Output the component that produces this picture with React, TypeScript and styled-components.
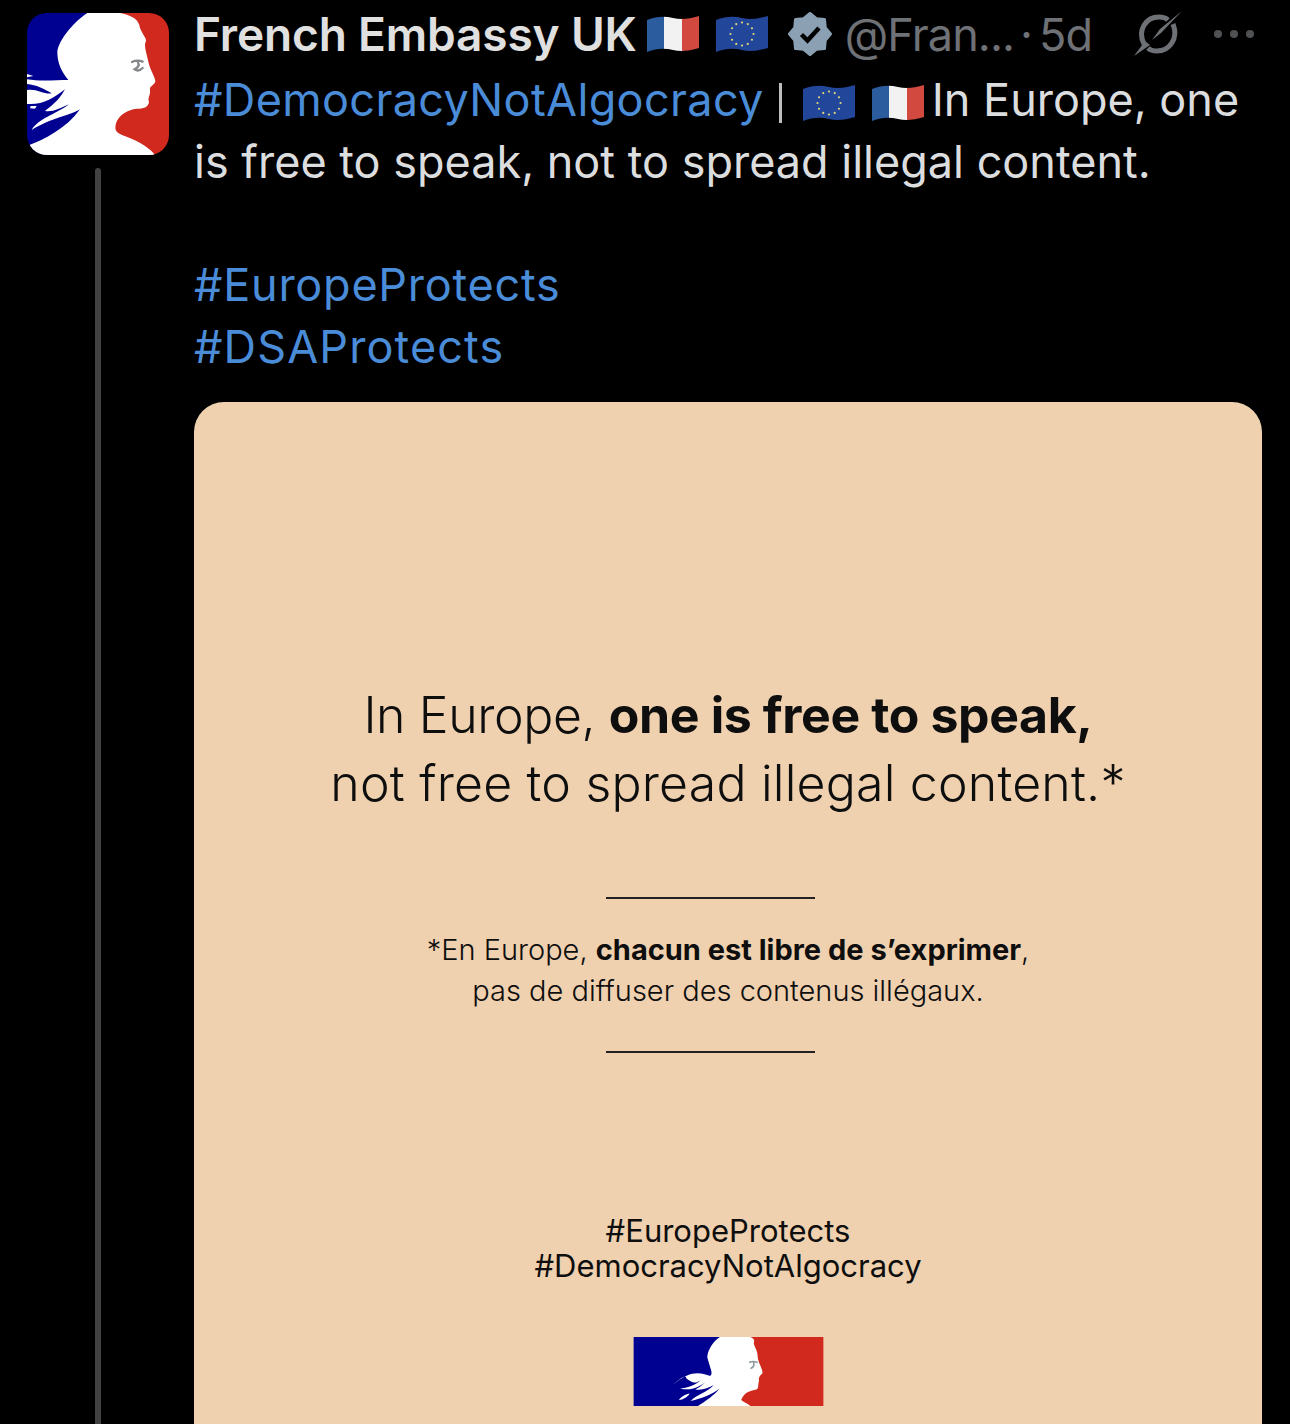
import React from "react";
import styled, { createGlobalStyle } from "styled-components";

const Global = createGlobalStyle`
  html, body { margin: 0; padding: 0; background: #000; }
  body { font-family: "Inter", "Liberation Sans", sans-serif; }
`;

const Page = styled.div`
  width: 1290px;
  height: 1424px;
  overflow: hidden;
  background: #000;
  display: grid;
  grid-template-columns: 194px 1068px;
`;

const Rail = styled.div`
  display: flex;
  flex-direction: column;
  align-items: flex-start;
  padding: 13px 0 0 27px;
`;

const AvatarFrame = styled.svg`
  display: block;
  width: 142px;
  height: 142px;
  border-radius: 20px;
`;

const ThreadLine = styled.div`
  width: 6px;
  flex: 1;
  margin: 13px 0 0 68px;
  background: #424242;
  border-radius: 3px 3px 0 0;
`;

const Main = styled.div`
  display: flex;
  flex-direction: column;
  min-width: 0;
`;

const Header = styled.div`
  height: 68px;
  padding-bottom: 2px;
  display: flex;
  align-items: center;
  white-space: nowrap;
`;

const Name = styled.span`
  font-size: 46px;
  font-weight: 600;
  letter-spacing: -0.15px;
  color: #e0e0e0;
  margin-right: 10px;
`;

const Handle = styled.span`
  font-size: 45px;
  font-weight: 400;
  letter-spacing: -0.9px;
  color: #6e7175;
`;

const HandleDot = styled(Handle)`
  margin-left: 6px;
`;

const Age = styled(Handle)`
  margin-left: 7px;
`;

const Body = styled.div`
  font-size: 45px;
  line-height: 61.5px;
  color: #dcdddf;
  margin-top: -1px;
  white-space: nowrap;
`;

const Tag = styled.span<{ $ls: number }>`
  color: #4a8cd8;
  letter-spacing: ${(p) => p.$ls}px;
`;

const Divider = styled.span`
  display: inline-block;
  width: 3px;
  height: 40px;
  background: #bdbdbd;
  vertical-align: -7px;
  margin: 0 21px 0 15px;
`;

const Blank = styled.div`
  height: 62px;
`;

const Card = styled.div`
  margin-top: 25px;
  flex: 1;
  min-height: 1100px;
  background: #efd1b0;
  border-radius: 30px 30px 0 0;
  display: flex;
  flex-direction: column;
  align-items: center;
  color: #0e0e0e;
  padding-top: 279px;
`;

const Headline = styled.div`
  font-size: 50px;
  line-height: 68px;
  text-align: center;
  white-space: nowrap;
  font-weight: 300;
  b { font-weight: 700; }
`;

const HeadlineRow = styled.div<{ $ls: number }>`
  letter-spacing: ${(p) => p.$ls}px;
`;

const Rule = styled.div<{ $top: number }>`
  width: 209px;
  height: 2px;
  background: #222;
  margin: ${(p) => p.$top}px 35px 0 0;
`;

const French = styled.div`
  margin-top: 30px;
  font-size: 29px;
  line-height: 41px;
  text-align: center;
  white-space: nowrap;
  font-weight: 300;
  b { font-weight: 700; }
`;

const Tags = styled.div`
  margin-top: 160px;
  font-size: 31px;
  line-height: 35px;
  text-align: center;
  white-space: nowrap;
  font-weight: 400;
`;

const LogoFrame = styled.svg`
  display: block;
  width: 191px;
  height: 69px;
  margin-top: 54px;
`;

const InlineFlag = styled.svg<{ $right: number }>`
  display: inline-block;
  width: 52px;
  height: 38px;
  vertical-align: -6px;
  margin-right: ${(p) => p.$right}px;
`;

const HeaderFlag = styled.svg<{ $gap: number }>`
  width: 52px;
  height: 38px;
  flex: none;
  margin-right: ${(p) => p.$gap}px;
`;

const Badge = styled.svg`
  width: 44px;
  height: 44px;
  flex: none;
  margin: 0 13px 0 20px;
`;

const Grok = styled.svg`
  width: 52px;
  height: 52px;
  flex: none;
  margin-left: 40px;
`;

const More = styled.svg`
  width: 44px;
  height: 12px;
  flex: none;
  margin-left: 28px;
`;

const WAVE = "M0 5 C10 1 18 1 26 3 C34 5 42 4 52 1 L52 33 C42 36 34 37 26 35 C18 33 10 33 0 37 Z";

const Flag = ({ kind, clip }: { kind: "fr" | "eu"; clip: string }) => (
  <>
    <defs>
      <clipPath id={clip}>
        <path d={WAVE} />
      </clipPath>
    </defs>
    <g clipPath={`url(#${clip})`}>
      {kind === "fr" ? (
        <>
          <rect x="0" y="0" width="18" height="38" fill="#2b5c9e" />
          <rect x="17" y="0" width="19" height="38" fill="#f2f2f2" />
          <rect x="35" y="0" width="17" height="38" fill="#d1493f" />
        </>
      ) : (
        <rect x="0" y="0" width="52" height="38" fill="#22479a" />
      )}
    </g>
    {kind === "eu" &&
      Array.from({ length: 12 }).map((_, i) => {
        const a = (i * Math.PI) / 6;
        return (
          <circle
            key={i}
            cx={26 + Math.cos(a) * 11.5}
            cy={19 + Math.sin(a) * 11.5}
            r="1.1"
            fill="#e0d878"
          />
        );
      })}
  </>
);

const BADGE_POINTS = Array.from({ length: 16 })
  .map((_, i) => {
    const a = (i * Math.PI) / 8 - Math.PI / 2;
    const r = i % 2 === 0 ? 20.5 : 16.5;
    return `${(22 + Math.cos(a) * r).toFixed(2)},${(22 + Math.sin(a) * r).toFixed(2)}`;
  })
  .join(" ");

const Avatar = () => (
  <AvatarFrame viewBox="81 39 426 426">
    <rect x="81" y="39" width="213" height="426" fill="#000091" />
    <rect x="294" y="39" width="213" height="426" fill="#d1291d" />
    <path
      fill="#fff"
      d="M262 39 L360 39 C390 45 412 55 418 75 C420 95 440 112 438 124 C430 135 440 160 445 185 C450 210 466 230 466 245 C460 258 448 258 450 270 C452 285 442 295 447 305 C445 322 430 326 410 326 C385 328 355 345 348 370 C342 395 350 400 380 410 C420 425 450 445 465 465 L105 465 L88 435 C130 420 200 385 240 328 C215 345 150 355 95 390 C115 355 165 345 207 313 C180 325 155 338 135 333 C150 320 175 305 195 268 C160 295 130 315 81 312 L81 270 C110 265 135 285 155 280 C130 265 110 255 81 252 L81 238 C120 245 170 240 205 240 C185 215 172 190 172 155 C175 125 215 70 262 39 Z"
    />
    <path fill="#fff" d="M81 222 L100 228 L81 232 Z" />
    <path fill="#fff" d="M92 318 L110 318 L105 326 L90 325 Z" />
    <path
      fill="none"
      stroke="#85888b"
      strokeWidth="7"
      strokeLinecap="round"
      d="M396 186 C408 180 420 182 428 185 M414 188 C420 196 412 204 404 208 C412 214 420 212 428 204"
    />
  </AvatarFrame>
);

const LogoMark = () => (
  <LogoFrame viewBox="96 50 572 208">
    <rect x="96" y="50" width="290" height="208" fill="#000091" />
    <rect x="380" y="50" width="288" height="208" fill="#d1291d" />
    <path
      fill="#fff"
      d="M356 50 L445 50 C458 52 462 60 458 68 C460 80 470 90 470 110 C472 130 488 150 484 160 C475 168 472 172 474 182 C470 195 474 205 466 208 C450 212 430 214 420 240 C435 250 445 255 448 258 L290 258 C310 245 340 225 355 205 C335 222 300 235 268 243 C285 225 320 215 338 195 C320 205 300 212 282 208 C300 200 315 185 330 163 C335 158 322 130 318 110 C320 85 340 60 356 50 Z"
    />
    <path fill="#fff" d="M330 168 C300 160 270 145 215 195 C240 170 255 165 255 175 C270 185 280 195 300 178 C285 195 255 205 236 205 C270 215 310 195 330 168 Z" />
    <path fill="#fff" d="M232 240 C240 228 255 222 265 220 C258 232 245 238 232 240 Z" />
    <path fill="none" stroke="#8f9a9c" strokeWidth="5" strokeLinecap="round" d="M446 126 C455 122 462 124 468 126 M458 128 C460 136 455 142 450 144" />
  </LogoFrame>
);

export default function App() {
  return (
    <Page>
      <Global />
      <Rail>
        <Avatar />
        <ThreadLine />
      </Rail>
      <Main>
        <Header>
          <Name>French Embassy UK</Name>
          <HeaderFlag $gap={17} viewBox="0 0 52 38"><Flag kind="fr" clip="a" /></HeaderFlag>
          <HeaderFlag $gap={0} viewBox="0 0 52 38"><Flag kind="eu" clip="b" /></HeaderFlag>
          <Badge viewBox="0 0 44 44">
            <polygon points={BADGE_POINTS} fill="#8ba0b3" stroke="#8ba0b3" strokeWidth="3" strokeLinejoin="round" />
            <path d="M13.5 22.5 L19.5 28.5 L31 16" fill="none" stroke="#000" strokeWidth="4.5" />
          </Badge>
          <Handle>@Fran...</Handle>
          <HandleDot>·</HandleDot>
          <Age>5d</Age>
          <Grok viewBox="0 0 52 52">
            <path
              fill="none"
              stroke="#6e7175"
              strokeWidth="5"
              d="M12 36 C5 22 14 9 27 9 C31 9 34 10 36 12 M41 16 C47 31 37 43 25 43 C21 43 18 42 16 40"
            />
            <path fill="#6e7175" d="M50 3 L29 25 L20 32 L28 21 Z" />
            <path fill="#6e7175" d="M2 48 L13 33 L18 37 Z" />
          </Grok>
          <More viewBox="0 0 44 12">
            <circle cx="6" cy="6" r="4" fill="#4f5154" />
            <circle cx="22" cy="6" r="4" fill="#4f5154" />
            <circle cx="38" cy="6" r="4" fill="#4f5154" />
          </More>
        </Header>
        <Body>
          <Tag $ls={0.35}>#DemocracyNotAlgocracy</Tag>
          <Divider />
          <InlineFlag $right={17} viewBox="0 0 52 38"><Flag kind="eu" clip="c" /></InlineFlag>
          <InlineFlag $right={8} viewBox="0 0 52 38"><Flag kind="fr" clip="d" /></InlineFlag>
          In Europe, one
          <br />
          is free to speak, not to spread illegal content.
          <Blank />
          <Tag $ls={0.75}>#EuropeProtects</Tag>
          <br />
          <Tag $ls={1.1}>#DSAProtects</Tag>
        </Body>
        <Card>
          <Headline>
            <HeadlineRow $ls={-0.4}>
              In Europe, <b>one is free to speak,</b>
            </HeadlineRow>
            <HeadlineRow $ls={0.2}>not free to spread illegal content.*</HeadlineRow>
          </Headline>
          <Rule $top={80} />
          <French>
            *En Europe, <b>chacun est libre de s’exprimer</b>,
            <br />
            pas de diffuser des contenus illégaux.
          </French>
          <Rule $top={40} />
          <Tags>
            #EuropeProtects
            <br />
            #DemocracyNotAlgocracy
          </Tags>
          <LogoMark />
        </Card>
      </Main>
    </Page>
  );
}
